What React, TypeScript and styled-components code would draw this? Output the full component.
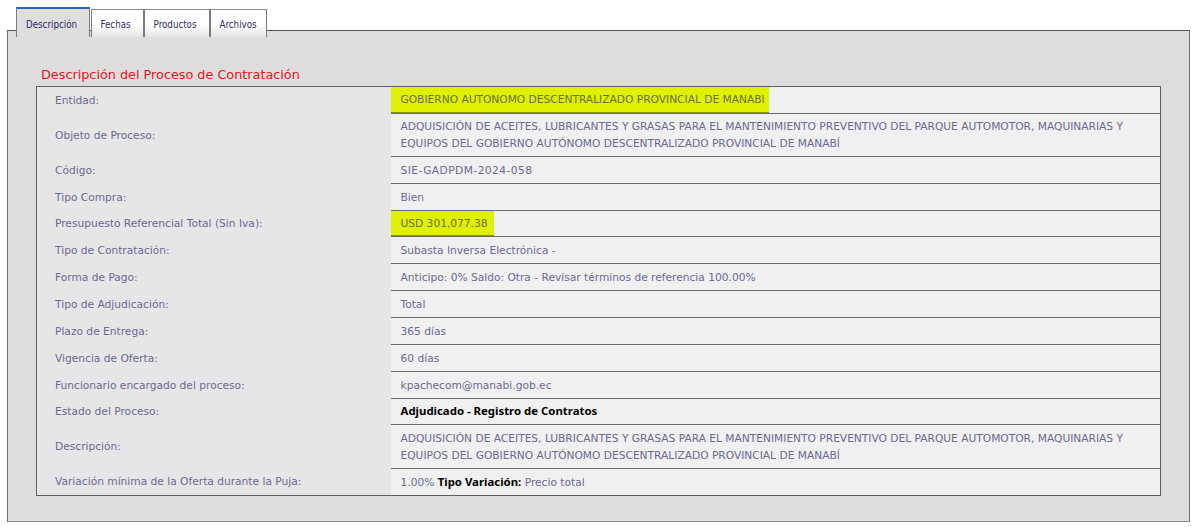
import React from 'react'
import styled, { createGlobalStyle } from 'styled-components'

const GlobalStyle = createGlobalStyle`
  html, body {
    margin: 0;
    padding: 0;
    background: #fff;
  }
`

const Page = styled.div`
  width: 1200px;
  height: 527px;
  padding: 7px 10px 5px 7px;
  box-sizing: border-box;
  display: flex;
  flex-direction: column;
  overflow: hidden;
`

const TabBar = styled.div`
  display: flex;
  align-items: flex-end;
  padding-left: 9px;
  height: 30px;
  position: relative;
  z-index: 1;
`

const Tab = styled.div<{ active?: boolean }>`
  height: ${props => (props.active ? '30px' : '28px')};
  box-sizing: border-box;
  padding: ${props => (props.active ? '2px 12px 0 9px' : '1px 12.5px 0 8.5px')};
  margin-right: ${props => (props.active ? '1px' : '0')};
  display: flex;
  align-items: center;
  font-family: 'DejaVu Sans Condensed', 'DejaVu Sans', sans-serif;
  font-stretch: condensed;
  font-size: 9.7px;
  color: #2f2a66;
  border: 1px solid #7c7c7c;
  border-bottom: none;
  border-top: ${props => (props.active ? '2px solid #2f63c0' : '1px solid #8a8a8a')};
  background: ${props => (props.active ? '#dedede' : 'linear-gradient(#ffffff 55%, #e4e4e4)')};

  &:last-child {
    padding-right: 9px;
  }
`

const Panel = styled.div`
  flex: 1;
  margin-top: -7px;
  box-sizing: border-box;
  background: #dddddd;
  border: 1px solid #6e6e6e;
  border-top-color: #555;
  border-bottom-color: #8b8b8b;
  padding: 35px 28px 25px 28px;
`

const Title = styled.div`
  height: 20px;
  padding-left: 5px;
  font-family: 'DejaVu Sans', sans-serif;
  font-size: 12.8px;
  line-height: 18px;
  color: #e3161b;
`

const DetailTable = styled.table`
  width: 1125px;
  border-collapse: collapse;
  table-layout: fixed;
  border: 1px solid #5f5f5f;
  font-family: 'DejaVu Sans', sans-serif;
  font-size: 10.65px;
  color: #6a6994;
`

const Row = styled.tr<{ h: number }>`
  height: ${props => props.h}px;
`

const Label = styled.td`
  width: 354px;
  box-sizing: border-box;
  padding: 0 0 0 18px;
  background: #e6e6e6;
`

const Value = styled.td<{ wide?: boolean }>`
  padding: 0 10px;
  line-height: 17px;
  background: #f0f0f0;
  border-top: 1px solid #6b6b6b;
  letter-spacing: ${props => (props.wide ? '0.45px' : '0')};

  tr:first-child > & {
    border-top: none;
  }
`

const Marker = styled.span<{ wide: number; h: number; nudge?: boolean }>`
  display: block;
  width: ${props => props.wide}px;
  box-sizing: border-box;
  margin-left: -10px;
  padding: ${props => (props.nudge ? '1px' : '0')} 0 0 10px;
  line-height: ${props => props.h}px;
  background: #dff000;
  color: #6a7036;
  border-bottom: 1px solid #8a9400;
`

const Strong = styled.strong`
  font-family: 'Noto Sans', sans-serif;
  font-size: 11.4px;
  line-height: 1;
  color: #000;
  font-weight: 700;
`

const objeto =
  'ADQUISICIÓN DE ACEITES, LUBRICANTES Y GRASAS PARA EL MANTENIMIENTO PREVENTIVO DEL PARQUE AUTOMOTOR, MAQUINARIAS Y EQUIPOS DEL GOBIERNO AUTÓNOMO DESCENTRALIZADO PROVINCIAL DE MANABÍ'

const App: React.FC = () => {
  return (
    <Page>
      <GlobalStyle />
      <TabBar>
        <Tab active>Descripción</Tab>
        <Tab>Fechas</Tab>
        <Tab>Productos</Tab>
        <Tab>Archivos</Tab>
      </TabBar>
      <Panel>
        <Title>Descripción del Proceso de Contratación</Title>
        <DetailTable>
          <tbody>
            <Row h={26}>
              <Label>Entidad:</Label>
              <Value><Marker wide={378} h={25}>GOBIERNO AUTONOMO DESCENTRALIZADO PROVINCIAL DE MANABI</Marker></Value>
            </Row>
            <Row h={43}>
              <Label>Objeto de Proceso:</Label>
              <Value>{objeto}</Value>
            </Row>
            <Row h={27}>
              <Label>Código:</Label>
              <Value wide>SIE-GADPDM-2024-058</Value>
            </Row>
            <Row h={27}>
              <Label>Tipo Compra:</Label>
              <Value>Bien</Value>
            </Row>
            <Row h={26}>
              <Label>Presupuesto Referencial Total (Sin Iva):</Label>
              <Value><Marker wide={103} h={23} nudge>USD 301,077.38</Marker></Value>
            </Row>
            <Row h={27}>
              <Label>Tipo de Contratación:</Label>
              <Value>Subasta Inversa Electrónica -</Value>
            </Row>
            <Row h={27}>
              <Label>Forma de Pago:</Label>
              <Value>Anticipo: 0% Saldo: Otra - Revisar términos de referencia 100.00%</Value>
            </Row>
            <Row h={27}>
              <Label>Tipo de Adjudicación:</Label>
              <Value>Total</Value>
            </Row>
            <Row h={27}>
              <Label>Plazo de Entrega:</Label>
              <Value>365 días</Value>
            </Row>
            <Row h={27}>
              <Label>Vigencia de Oferta:</Label>
              <Value>60 días</Value>
            </Row>
            <Row h={27}>
              <Label>Funcionario encargado del proceso:</Label>
              <Value>kpachecom@manabi.gob.ec</Value>
            </Row>
            <Row h={26}>
              <Label>Estado del Proceso:</Label>
              <Value><Strong>Adjudicado - Registro de Contratos</Strong></Value>
            </Row>
            <Row h={44}>
              <Label>Descripción:</Label>
              <Value>{objeto}</Value>
            </Row>
            <Row h={27}>
              <Label>Variación mínima de la Oferta durante la Puja:</Label>
              <Value>1.00% <Strong>Tipo Variación:</Strong> Precio total</Value>
            </Row>
          </tbody>
        </DetailTable>
      </Panel>
    </Page>
  )
}

export default App
